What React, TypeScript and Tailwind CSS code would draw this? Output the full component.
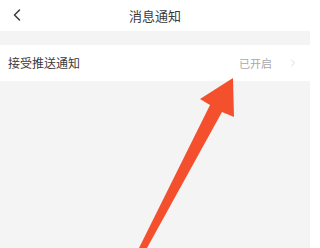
import { ChevronLeft, ChevronRight } from "lucide-react";

const App = () => {
  return (
    <div
      className="relative h-[248px] w-[310px] overflow-hidden bg-[#f4f4f4]"
      style={{ fontFamily: '"Noto Sans CJK SC", "Noto Sans", sans-serif' }}
    >
      {/* header */}
      <div className="relative flex h-[31px] items-center justify-center bg-white">
        <ChevronLeft
          className="absolute left-[7px] top-[5px] h-[20px] w-[20px] text-[#3a3a3a]"
          strokeWidth={1.8}
        />
        <span className="text-[13px] text-[#3a3a3a]">消息通知</span>
      </div>

      <div className="h-[14px]" />

      {/* row */}
      <div className="flex h-[36px] items-center justify-between bg-white pl-[8px] pr-[11px]">
        <span className="text-[12px] text-[#3a3a3a]">接受推送通知</span>
        <div className="flex items-center gap-[15px]">
          <span className="text-[11px] text-[#a8a8a8]">已开启</span>
          <ChevronRight className="h-[12px] w-[12px] text-[#cfcfcf]" strokeWidth={1.5} />
        </div>
      </div>

      {/* red annotation arrow */}
      <svg
        className="pointer-events-none absolute inset-0"
        width="310"
        height="248"
        viewBox="0 0 310 248"
      >
        <polygon
          points="233,78 234,117 222,112 147,248 139,248 210,105 200,99"
          fill="#f4502e"
        />
      </svg>
    </div>
  );
};

export default App;
